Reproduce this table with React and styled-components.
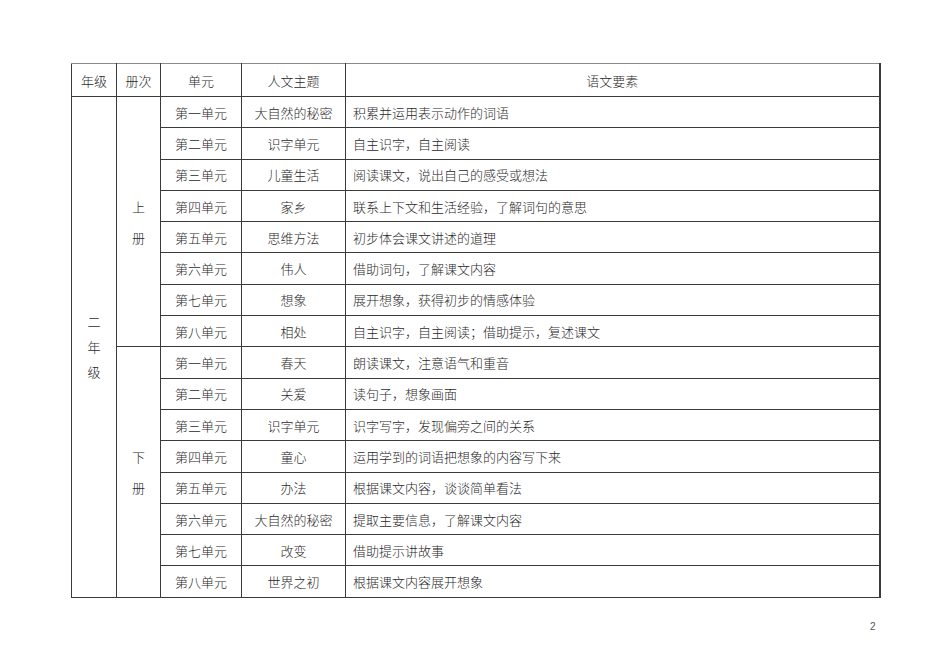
import React from "react";
import styled, { createGlobalStyle } from "styled-components";

const Global = createGlobalStyle`
  html, body { margin: 0; padding: 0; background: #fff; }
  body { width: 950px; height: 672px; overflow: hidden; }
`;

const Page = styled.div`
  position: relative;
  width: 950px;
  height: 672px;
  padding: 63px 0 0 71px;
  box-sizing: border-box;
  font-family: "Noto Sans CJK SC", "Noto Sans", sans-serif;
  color: #2a2a2a;
`;

const Table = styled.table`
  border-collapse: collapse;
  table-layout: fixed;
  width: 808px;
  font-size: 13px;
  border-right: 2px solid #3a3a3a;
`;

const Col = styled.col`
  width: ${(p) => p.$w}px;
`;

const Th = styled.th`
  height: 32px;
  padding: 0;
  font-weight: 300;
  text-align: center;
  border: 1px solid #3a3a3a;
  border-top-color: #8a8a8a;
  line-height: 1;
`;

const Td = styled.td`
  height: 30.3px;
  padding: 0 ${(p) => (p.$left ? "7px" : "0")};
  text-align: ${(p) => (p.$left ? "left" : "center")};
  vertical-align: middle;
  border: 1px solid #3a3a3a;
  line-height: 1;
  font-weight: 300;
  white-space: nowrap;
`;

const Vertical = styled.div`
  display: flex;
  flex-direction: column;
  align-items: center;
  gap: ${(p) => p.$gap}px;
`;

const PageNum = styled.div`
  position: absolute;
  left: 870px;
  top: 621px;
  font-family: "Liberation Sans", sans-serif;
  font-size: 10px;
  color: #555;
`;

const upper = [
  ["第一单元", "大自然的秘密", "积累并运用表示动作的词语"],
  ["第二单元", "识字单元", "自主识字，自主阅读"],
  ["第三单元", "儿童生活", "阅读课文，说出自己的感受或想法"],
  ["第四单元", "家乡", "联系上下文和生活经验，了解词句的意思"],
  ["第五单元", "思维方法", "初步体会课文讲述的道理"],
  ["第六单元", "伟人", "借助词句，了解课文内容"],
  ["第七单元", "想象", "展开想象，获得初步的情感体验"],
  ["第八单元", "相处", "自主识字，自主阅读；借助提示，复述课文"],
];

const lower = [
  ["第一单元", "春天", "朗读课文，注意语气和重音"],
  ["第二单元", "关爱", "读句子，想象画面"],
  ["第三单元", "识字单元", "识字写字，发现偏旁之间的关系"],
  ["第四单元", "童心", "运用学到的词语把想象的内容写下来"],
  ["第五单元", "办法", "根据课文内容，谈谈简单看法"],
  ["第六单元", "大自然的秘密", "提取主要信息，了解课文内容"],
  ["第七单元", "改变", "借助提示讲故事"],
  ["第八单元", "世界之初", "根据课文内容展开想象"],
];

function Rows({ data, label, first }) {
  return data.map((r, i) => (
    <tr key={label + i}>
      {first && i === 0 && (
        <Td rowSpan={16}>
          <Vertical $gap={12}>
            <span>二</span>
            <span>年</span>
            <span>级</span>
          </Vertical>
        </Td>
      )}
      {i === 0 && (
        <Td rowSpan={8}>
          <Vertical $gap={18}>
            <span>{label}</span>
            <span>册</span>
          </Vertical>
        </Td>
      )}
      <Td>{r[0]}</Td>
      <Td>{r[1]}</Td>
      <Td $left>{r[2]}</Td>
    </tr>
  ));
}

export default function App() {
  return (
    <Page>
      <Global />
      <Table>
        <colgroup>
          <Col $w={45} />
          <Col $w={44} />
          <Col $w={81} />
          <Col $w={104} />
          <Col $w={534} />
        </colgroup>
        <thead>
          <tr>
            <Th>年级</Th>
            <Th>册次</Th>
            <Th>单元</Th>
            <Th>人文主题</Th>
            <Th>语文要素</Th>
          </tr>
        </thead>
        <tbody>
          <Rows data={upper} label="上" first />
          <Rows data={lower} label="下" />
        </tbody>
      </Table>
      <PageNum>2</PageNum>
    </Page>
  );
}
